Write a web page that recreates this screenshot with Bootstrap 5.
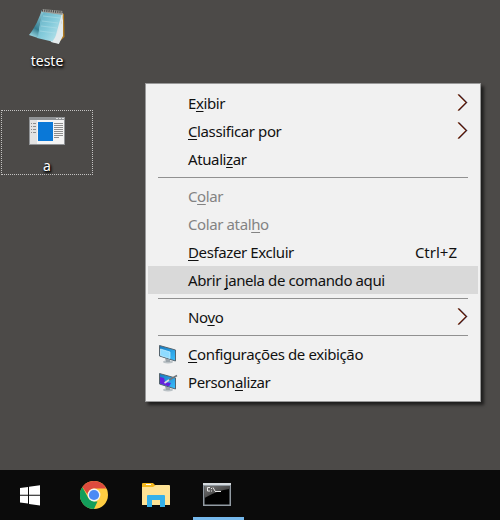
<!DOCTYPE html>
<html lang="pt-BR">
<head>
<meta charset="utf-8">
<meta name="viewport" content="width=device-width, initial-scale=1">
<title>Área de trabalho</title>
<link href="https://cdn.jsdelivr.net/npm/bootstrap@5.3.0/dist/css/bootstrap.min.css" rel="stylesheet">
<style>
body{width:500px;height:520px;background:#4c4a48;font:15px/28px "Noto Sans","Open Sans",sans-serif;color:#111}
.desk-item{width:92px;height:65px;margin-left:1px;color:#fff;font-size:14px;line-height:18px;text-shadow:1px 1px 2px #000,1px 2px 3px #000}
.desk-item svg{display:block;flex-shrink:0}
.desk-file{padding-top:8px;margin-bottom:45px}
.desk-app{border:1px dotted #c4c3c2;padding-top:6px}
.ctx{left:145px;top:83px;width:336px;height:319px;background:#f1f1f1;border:1px solid #999;padding:5px 2px;box-shadow:3px 3px 3px rgba(0,0,0,.6)}
.ctx-item{height:28px;padding:0 21px 0 40px;white-space:pre;letter-spacing:-.39px}
.ctx-key{letter-spacing:0}
.ctx-item u{text-underline-offset:2px;text-decoration-thickness:1px;text-decoration-skip-ink:none}
.ctx-off{color:#838383}
.ctx-on{background:#d9d9d9}
.ctx-iconed{padding-left:10px}
.ctx-iconed svg{width:20px;margin-right:10px}
.ctx-chev{padding-right:10px}
.ctx-chev svg{margin-top:5px}
.ctx-line{height:1px;margin:4px 10px;background:#919191}
.dock{height:50px;background:#0b0b0b;gap:11px;padding-left:4px}
.slot{width:51px;height:50px}
.chrome{margin-left:2px}
.folder{padding-left:1px}
.slot-active{border-bottom:3px solid #76b9ed;margin-left:1px;padding:2px 3px 0 0}
</style>
<script src="https://cdn.jsdelivr.net/npm/bootstrap@5.3.0/dist/js/bootstrap.bundle.min.js"></script>
</head>
<body class="d-flex flex-column overflow-hidden position-relative m-0">
<svg width="0" height="0" class="position-absolute">
  <defs>
    <linearGradient id="page" x1="0" y1="0" x2="1" y2="1"><stop offset="0" stop-color="#5fa9bd"/><stop offset=".5" stop-color="#84cbdb"/><stop offset="1" stop-color="#c5e9ef"/></linearGradient>
    <linearGradient id="curl" x1=".6" y1="0" x2=".3" y2="1"><stop offset="0" stop-color="#8cc6d3"/><stop offset=".65" stop-color="#357f92"/><stop offset="1" stop-color="#9fdbe6"/></linearGradient>
    <linearGradient id="screen" x1="0" y1="0" x2="1" y2="1"><stop offset="0" stop-color="#1478be"/><stop offset="1" stop-color="#3cc0ff"/></linearGradient>
    <linearGradient id="gloss" x1="0" y1="0" x2="1" y2="1"><stop offset="0" stop-color="#777"/><stop offset="1" stop-color="#262626"/></linearGradient>
    <symbol id="chev" viewBox="0 0 11 17"><path d="M1 .5 9 8.500 1 16.500" fill="none" stroke="#e28a38"/><path d="M2 .5 10 8.500 2 16.500" fill="none" stroke="#3568a8" stroke-width=".7"/><path d="M1.400 .5 9.400 8.500 1.400 16.500" fill="none" stroke="#4d1008" stroke-width="1.100"/></symbol>
  </defs>
</svg>
<main class="flex-grow-1">
  <div class="desk-item desk-file d-flex flex-column align-items-center">
    <svg width="37" height="36" viewBox="0 0 37 36"><path d="M33 5 35 6 35.500 29 31 33z" fill="#b07a20"/><path d="M13 2 34 5 30 36 22 34z" fill="#dfe8eb"/><path d="M13 2 33 5 25 34 8 30z" fill="url(#page)"/><path d="M13 2C10 10 6 20 0 27L9 30C10 20 11 10 15 3z" fill="url(#curl)"/><path d="M34 6C33 16 30 25 23 34L30 35.500 34 28z" fill="#e4ebed"/><path d="M14 8 31 10M13 13 29 15M12 18 28 20M11 23 26 25" stroke="#b7e0e9" stroke-width=".5"/><path d="M13 1 34 3 33.500 7 13 4z" fill="#9d9d98"/><path d="M13 2.300 34 4.300" stroke="#454545" stroke-width="2.200" stroke-dasharray="1 1.200"/></svg>
    <span class="mt-2">teste</span>
  </div>
  <div class="desk-item desk-app d-flex flex-column align-items-center">
    <svg width="36" height="28" viewBox="0 0 36 28"><path fill="#909396" d="M0 0h36v28H0z"/><path fill="#f4f4f4" d="M1 3h34v24H1z"/><path fill="#e2e2e2" d="M1 3h7v24H1z"/><path fill="#0a78d7" d="M9 5h15v19H9z"/><path stroke="#dedede" d="M27 1.500h2m1 0h2m1 0h2"/><path stroke="#8d8d8d" d="M2 6.500h1m1 0h3M2 9.500h1m1 0h3M2 12.500h1m1 0h3M2 15.500h1m1 0h3M25 6.500h9m-9 2h9m-9 2h9m-9 2h9m-9 2h9m-9 2h9m-9 2h9m-9 2h5"/></svg>
    <span class="mt-2 pt-1">a</span>
  </div>
</main>
<div class="ctx position-absolute">
  <div class="ctx-item ctx-chev d-flex justify-content-between"><span>E<u>x</u>ibir</span><svg width="11" height="17"><use href="#chev"/></svg></div>
  <div class="ctx-item ctx-chev d-flex justify-content-between"><span><u>C</u>lassificar por</span><svg width="11" height="17"><use href="#chev"/></svg></div>
  <div class="ctx-item"><span>Atuali<u>z</u>ar</span></div>
  <div class="ctx-line"></div>
  <div class="ctx-item ctx-off"><span>C<u>o</u>lar</span></div>
  <div class="ctx-item ctx-off"><span>Colar atal<u>h</u>o</span></div>
  <div class="ctx-item d-flex justify-content-between"><span><u>D</u>esfazer Excluir</span><span class="ctx-key">Ctrl+Z</span></div>
  <div class="ctx-item ctx-on"><span>Abrir <u>j</u>anela de comando aqui</span></div>
  <div class="ctx-line"></div>
  <div class="ctx-item ctx-chev d-flex justify-content-between"><span>No<u>v</u>o</span><svg width="11" height="17"><use href="#chev"/></svg></div>
  <div class="ctx-line"></div>
  <div class="ctx-item ctx-iconed d-flex align-items-center">
    <svg width="20" height="20" viewBox="0 0 20 20"><ellipse cx="10" cy="18" rx="5" ry="1.400" fill="#bac1c5"/><path d="M7 14 12 16V18H8z" fill="#9ba4aa"/><path d="M1.500 1.500 17.500 6V17L1.500 12z" fill="url(#screen)" stroke="#54636d"/><path d="M2.500 5 12 8V14.500L2.500 11.500z" fill="#8edbff" stroke="#c9efff" stroke-width=".7"/></svg><span><u>C</u>onfigurações de exibição</span></div>
  <div class="ctx-item ctx-iconed d-flex align-items-center">
    <svg width="20" height="20" viewBox="0 0 20 20"><ellipse cx="10" cy="18" rx="5" ry="1.400" fill="#bac1c5"/><path d="M7 14 12 16V18H8z" fill="#9ba4aa"/><path d="M1.500 1.500 17.500 6V17L1.500 12z" fill="url(#screen)" stroke="#54636d"/><path d="M2 5 6 6 7 10 13 11 11 14.500 2 11.500z" fill="#6620dc"/><path d="M19 3.500 11 8" stroke="#70767a" stroke-width="1.600"/><path d="M11 8 6.500 11" stroke="#d9dde0" stroke-width="1.600"/></svg><span>Person<u>a</u>lizar</span></div>
</div>
<footer class="dock d-flex">
  <div class="slot d-flex align-items-center justify-content-center"><svg width="20" height="21" viewBox="0 0 20 21"><path fill="#fff" d="M0 3 8 2V9.700H0zM9 1.800 20 .3V9.700H9zM0 10.700H8V18.600L0 17.400zM9 10.700H20V20.600L9 18.900z"/></svg></div>
  <div class="slot chrome d-flex align-items-center justify-content-center"><svg width="28" height="28" viewBox="0 0 28 28"><circle cx="14" cy="14" r="14" fill="#ffcd42"/><path fill="#139e5b" d="M2.400 6 8.400 17.300 14 20.500H17.500L14 28A14 14 0 0 1 2.400 6z"/><path fill="#dd4b3e" d="M14 0A14 14 0 0 1 26.400 7.500H14A6.500 6.500 0 0 0 7.700 13.500L2.400 6A14 14 0 0 1 14 0z"/><circle cx="14" cy="14" r="6.400" fill="#f3f4f4"/><circle cx="14" cy="14" r="5.100" fill="#4b8af4"/></svg></div>
  <div class="slot folder d-flex align-items-center justify-content-center"><svg width="28" height="24" viewBox="0 0 28 24"><path d="M0 1Q0 0 1 0H11L13 2H27V21H0z" fill="#f5b91e"/><path d="M0 4H11L14 2H27Q28 2 28 3V22H0z" fill="#ffe395"/><path d="M4 1.500H9" stroke="#fff"/><path d="M5 24V13Q5 12 6 12H22Q23 12 23 13V24H18V17H10V24z" fill="#35b1ea"/></svg></div>
  <div class="slot slot-active d-flex align-items-center justify-content-center"><svg width="28" height="23" viewBox="0 0 28 23"><path fill="#929ba3" d="M0 0H28V23H0z"/><path fill="#d5dade" d="M0 0H28V2H0z"/><path fill="#020202" d="M1.500 3H26.500V21.500H1.500z"/><path fill="url(#gloss)" d="M1.500 3H26.500V6Q15 7 1.500 15z"/><path stroke="#e7e7e7" fill="none" d="M7 4.500H4.500V8H7M8.500 5V6M8.500 7.500V8.500M10 4.500 12 8M12 8.500H18"/></svg></div>
</footer>
</body>
</html>
